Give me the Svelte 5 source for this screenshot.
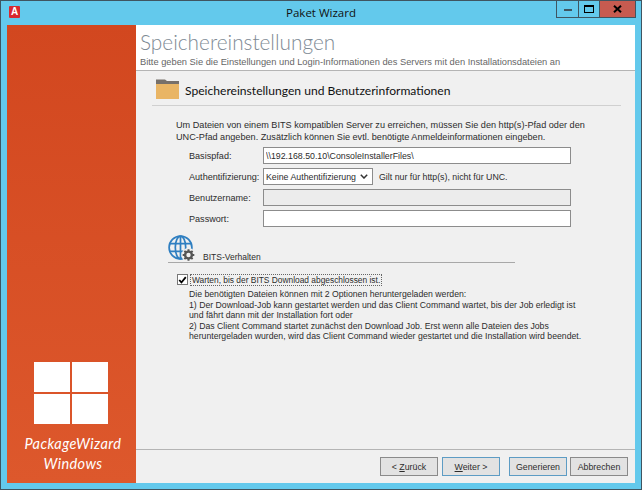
<script lang="ts">
	const intro = [
		'Um Dateien von einem BITS kompatiblen Server zu erreichen, müssen Sie den http(s)-Pfad oder den',
		'UNC-Pfad angeben. Zusätzlich können Sie evtl. benötigte Anmeldeinformationen eingeben.'
	];
	const details = [
		'Die benötigten Dateien können mit 2 Optionen heruntergeladen werden:',
		'1) Der Download-Job kann gestartet werden und das Client Command wartet, bis der Job erledigt ist',
		'und fährt dann mit der Installation fort oder',
		'2) Das Client Command startet zunächst den Download Job. Erst wenn alle Dateien des Jobs',
		'heruntergeladen wurden, wird das Client Command wieder gestartet und die Installation wird beendet.'
	];
</script>

<div class="window">
	<header class="titlebar">
		<span class="app-icon">A</span>
		<span class="title">Paket Wizard</span>
		<div class="controls">
			<span class="ctl min"><i></i></span>
			<span class="ctl max"><i></i></span>
			<span class="ctl close">
				<svg viewBox="0 0 9 8" width="9" height="8" aria-hidden="true">
					<path d="M1 0.8L8 7.2M8 0.8L1 7.2" fill="none" stroke="#000" stroke-width="2" />
				</svg>
			</span>
		</div>
	</header>

	<div class="client">
		<aside class="side">
			<div class="tiles"><i></i><i></i><i></i><i></i></div>
			<div class="brand">PackageWizard<br />Windows</div>
		</aside>

		<main class="main">
			<div class="head">
				<h1>Speichereinstellungen</h1>
				<p>Bitte geben Sie die Einstellungen und Login-Informationen des Servers mit den Installationsdateien an</p>
			</div>

			<div class="body">
				<div class="section">
					<svg class="folder" viewBox="0 0 23 20" width="23" height="20" aria-hidden="true">
						<path d="M0 2V0.5H9L11 2H23V5H0Z" fill="#77706a" />
						<rect y="5" width="23" height="15" fill="#e9b565" />
					</svg>
					<h2>Speichereinstellungen und Benutzerinformationen</h2>
				</div>

				<div class="intro">
					{#each intro as line}<div>{line}</div>{/each}
				</div>

				<div class="form">
					<label for="base">Basispfad:</label>
					<input id="base" value="\\192.168.50.10\ConsoleInstallerFiles\" />

					<label for="auth">Authentifizierung:</label>
					<div class="auth-row">
						<div class="select" id="auth">
							<span>Keine Authentifizierung</span>
							<svg viewBox="0 0 8 5" width="8" height="5" aria-hidden="true">
								<path d="M0.8 0.8L4 4L7.2 0.8" fill="none" stroke="#333" stroke-width="1.5" />
							</svg>
						</div>
						<span class="hint">Gilt nur für http(s), nicht für UNC.</span>
					</div>

					<label for="user">Benutzername:</label>
					<input id="user" disabled />

					<label for="pass">Passwort:</label>
					<input id="pass" type="password" />
				</div>

				<div class="bits">
					<svg viewBox="0 0 28 27" width="28" height="27" aria-hidden="true">
						<g fill="none" stroke="#2f7fc1" stroke-width="1.7">
							<circle cx="12.5" cy="12.5" r="11.4" />
							<ellipse cx="12.5" cy="12.5" rx="5.2" ry="11.4" />
							<path d="M12.5 1V24M1.5 8.6H23.5M1.5 16.4H23.5" />
						</g>
						<circle cx="20.5" cy="20" r="7" fill="#f0f0f0" />
						<circle cx="20.5" cy="20" r="3.4" fill="none" stroke="#555" stroke-width="2.4" />
						<path d="M20.5 14.2V16M20.5 24V25.8M14.7 20H16.5M24.5 20H26.3M16.4 15.9L17.7 17.2M23.3 22.8L24.6 24.1M24.6 15.9L23.3 17.2M17.7 22.8L16.4 24.1" stroke="#555" stroke-width="2" />
					</svg>
					<span>BITS-Verhalten</span>
				</div>

				<div class="check">
					<span class="box">
						<svg viewBox="0 0 11 10" width="11" height="10" aria-hidden="true">
							<path d="M1.5 5L4.2 8L9.5 1.5" fill="none" stroke="#000" stroke-width="2.2" />
						</svg>
					</span>
					<span class="focus">Warten, bis der BITS Download abgeschlossen ist.</span>
				</div>

				<div class="details">
					{#each details as line}<div>{line}</div>{/each}
				</div>

				<footer class="footer">
					<button>&lt; <u>Z</u>urück</button>
					<button class="accent"><u>W</u>eiter &gt;</button>
					<button class="accent gen">Generieren</button>
					<button>Abbrechen</button>
				</footer>
			</div>
		</main>
	</div>
</div>

<style>
	:global(body) {
		margin: 0;
	}
	.window {
		width: 642px;
		height: 490px;
		box-sizing: border-box;
		display: flex;
		flex-direction: column;
		background: #63c9ec;
		border: 1px solid #3f5561;
		font-family: "Liberation Sans", sans-serif;
		font-size: 8.8px;
		color: #2c2c2c;
		overflow: hidden;
	}
	.titlebar {
		height: 24px;
		flex: none;
		display: flex;
		align-items: flex-start;
		position: relative;
	}
	.app-icon {
		width: 11px;
		height: 12px;
		margin: 5px 0 0 8px;
		background: #d8282f;
		border-radius: 1px;
		color: #fff;
		font: bold 10px/12px "Liberation Sans", sans-serif;
		text-align: center;
	}
	.title {
		position: absolute;
		left: 0;
		right: 0;
		top: 4px;
		text-align: center;
		font-family: "Open Sans", sans-serif;
		font-size: 11.5px;
		line-height: 16px;
		color: #111;
	}
	.controls {
		margin-left: auto;
		margin-right: 5px;
		margin-top: -1px;
		display: flex;
		height: 18px;
		position: relative;
	}
	.ctl {
		box-sizing: border-box;
		height: 18px;
		border: 1px solid #3f5561;
		border-top: 0;
		border-left-width: 0;
		display: flex;
		align-items: center;
		justify-content: center;
	}
	.min {
		width: 23px;
		border-left-width: 1px;
	}
	.min i {
		width: 8px;
		height: 2px;
		background: #3f5561;
		margin-top: 3px;
	}
	.max {
		width: 21px;
	}
	.max i {
		width: 8px;
		height: 5px;
		border: 1.5px solid #000;
		border-top-width: 2px;
	}
	.close {
		width: 36px;
		background: #c75b50;
	}
	.client {
		flex: 1;
		display: flex;
		margin: 0 6px 6px 6px;
		min-height: 0;
	}
	.side {
		width: 129px;
		flex: none;
		background: linear-gradient(180deg, #d2471f, #dd582c);
		display: flex;
		flex-direction: column;
		align-items: center;
		justify-content: flex-end;
	}
	.tiles {
		display: grid;
		grid-template-columns: 36px 36px;
		grid-auto-rows: 30px;
		gap: 2px;
		margin: 0 2px 10px 0;
	}
	.tiles i {
		background: #fff;
	}
	.brand {
		font-family: "Lato", sans-serif;
		font-style: italic;
		font-size: 14.5px;
		line-height: 20px;
		letter-spacing: 0.4px;
		color: #fff;
		text-align: center;
		margin: 0 0 9px 3px;
	}
	.main {
		flex: 1;
		min-width: 0;
		display: flex;
		flex-direction: column;
		background: #f0f0f0;
	}
	.head {
		height: 46px;
		flex: none;
		box-sizing: border-box;
		background: #fff;
		border-bottom: 1px solid #b4b4b4;
		padding: 3px 0 0 4px;
	}
	h1 {
		margin: 0;
		font-family: "Lato", sans-serif;
		font-weight: 300;
		font-size: 20.8px;
		line-height: 28px;
		color: #7e8a94;
	}
	.head p {
		margin: 0;
		font-size: 9.3px;
		line-height: 12px;
		font-weight: 500;
		color: #666;
	}
	.body {
		flex: 1;
		display: flex;
		flex-direction: column;
		min-height: 0;
		position: relative;
	}
	.section {
		margin: 0 14px 0 16px;
		height: 35px;
		box-sizing: border-box;
		border-bottom: 1px solid #d0d0d0;
		display: flex;
		align-items: center;
		gap: 6px;
		padding: 2px 0 0 4px;
	}
	.section h2 {
		margin: 2px 0 0;
		font-family: "Lato", sans-serif;
		font-weight: 400;
		font-size: 12.1px;
		color: #111;
	}
	.intro {
		margin: 13px 0 0 40px;
		font-size: 9.15px;
		line-height: 12px;
		white-space: nowrap;
	}
	.form {
		margin: 4px 0 0 53px;
		display: grid;
		grid-template-columns: 74px 308px;
		grid-auto-rows: 17px;
		row-gap: 4px;
		align-items: center;
	}
	label {
		font-size: 9.1px;
		padding-top: 1px;
	}
	input {
		box-sizing: border-box;
		width: 100%;
		height: 17px;
		border: 1px solid #8c8c8c;
		border-radius: 0;
		background: #fff;
		padding: 0 2px;
		font: inherit;
		color: #2c2c2c;
		outline: none;
	}
	input:disabled {
		background: #ececec;
	}
	.auth-row {
		display: flex;
		align-items: center;
		gap: 6px;
		white-space: nowrap;
	}
	.select {
		box-sizing: border-box;
		width: 110px;
		height: 17px;
		border: 1px solid #8c8c8c;
		background: #fff;
		display: flex;
		align-items: center;
		justify-content: space-between;
		padding: 0 4px 0 2px;
	}
	.bits {
		margin: 7px 0 0 32px;
		width: 347px;
		height: 28px;
		border-bottom: 1px solid #a8a8a8;
		display: flex;
		align-items: flex-end;
		gap: 7px;
		font-size: 8.5px;
	}
	.bits svg {
		flex: none;
	}
	.bits span {
		line-height: 10px;
	}
	.check {
		margin: 10px 0 0 41px;
		display: flex;
		align-items: center;
		gap: 2px;
		height: 13px;
	}
	.box {
		box-sizing: border-box;
		width: 11px;
		height: 11px;
		border: 1px solid #777;
		background: #fff;
		display: flex;
		align-items: center;
		justify-content: center;
	}
	.focus {
		border: 1px dotted #666;
		padding: 0 1px;
		font-size: 8.4px;
		line-height: 10px;
		white-space: nowrap;
	}
	.details {
		margin: 3px 0 0 53px;
		font-size: 8.7px;
		line-height: 10.5px;
		white-space: nowrap;
	}
	.footer {
		margin-top: auto;
		height: 34px;
		box-sizing: border-box;
		border-top: 1px solid #b4b4b4;
		display: flex;
		align-items: center;
		justify-content: flex-end;
		gap: 4px;
		padding: 0 7px 0 0;
	}
	button {
		box-sizing: border-box;
		width: 58px;
		height: 19px;
		border: 1px solid #8a8a8a;
		background: #e2e2e2;
		font: inherit;
		color: #2c2c2c;
		padding: 0;
	}
	button.accent {
		border-color: #5d9cc4;
	}
	button.gen {
		margin: 0 -1px 0 5px;
	}
</style>
